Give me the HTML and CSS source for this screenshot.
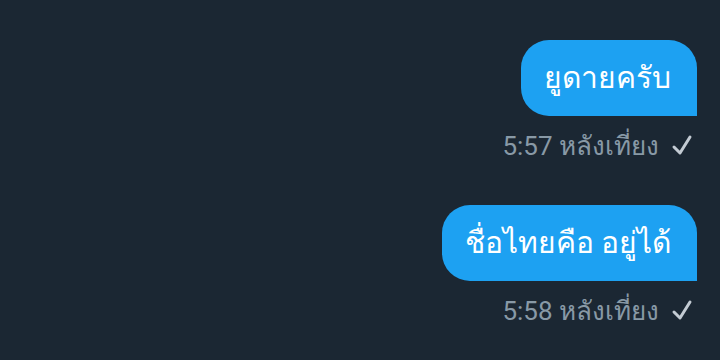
FILE: index.html
```html
<!DOCTYPE html>
<html lang="th">
<head>
    <meta charset="UTF-8">
    <title>แชท</title>
    <link rel="stylesheet" href="styles.css">
</head>
<body>
    <div class="chat">
        <div class="message">
            <div class="bubble">ยูดายครับ</div>
            <div class="meta">
                <span class="time">5:57 หลังเที่ยง</span>
                <svg class="check" width="22" height="22" viewBox="0 0 22 22"><path d="M3 13l6 6L19 3" fill="none" stroke="#c3cbd3" stroke-width="3" stroke-linecap="round" stroke-linejoin="round"/></svg>
            </div>
        </div>
        <div class="message">
            <div class="bubble">ชื่อไทยคือ อยู่ได้</div>
            <div class="meta">
                <span class="time">5:58 หลังเที่ยง</span>
                <svg class="check" width="22" height="22" viewBox="0 0 22 22"><path d="M3 13l6 6L19 3" fill="none" stroke="#c3cbd3" stroke-width="3" stroke-linecap="round" stroke-linejoin="round"/></svg>
            </div>
        </div>
    </div>
</body>
</html>
```

FILE: styles.css
```css
body {
    margin: 0;
    height: 360px;
    background: #1b2733;
    font-family: Roboto, "Noto Sans", sans-serif;
    overflow: hidden;
}
.chat {
    display: flex;
    flex-direction: column;
    align-items: flex-end;
    gap: 43px;
    padding: 40px 23px 0 0;
}
.message {
    display: flex;
    flex-direction: column;
    align-items: flex-end;
}
.bubble {
    background: #1da1f2;
    color: #fff;
    font-size: 30px;
    line-height: 76px;
    height: 76px;
    padding: 0 26px 0 23px;
    border-radius: 28px 28px 0 28px;
    box-sizing: border-box;
}
.meta {
    display: flex;
    align-items: center;
    gap: 12px;
    margin-top: 12px;
    margin-right: 4px;
    height: 34px;
}
.time {
    color: #8899a6;
    font-size: 26px;
}
.check {
    display: block;
}
```
